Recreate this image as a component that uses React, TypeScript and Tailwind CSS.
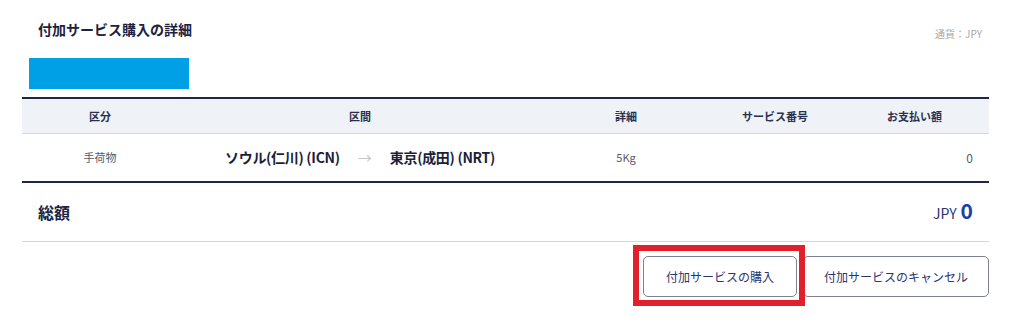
const font = { fontFamily: '"Noto Sans CJK JP", "Noto Sans", sans-serif' };

const cols = "grid grid-cols-[156px_364px_168px_130px_1fr]";

export default function App() {
  return (
    <div className="w-[1024px] h-[330px] bg-white pl-[22px] pr-[35px] text-[#1c2340]" style={font}>
      {/* heading */}
      <div className="flex items-end justify-between pt-[19px] pl-[16px] pr-[7px]">
        <h2 className="text-[14px] font-bold leading-[20px]">付加サービス購入の詳細</h2>
        <span className="text-[10px] text-[#a6a6a6] leading-[14px] -mb-[2px]">通貨：JPY</span>
      </div>
      <div className="ml-[7px] mt-[19px] h-[31px] w-[160px] bg-[#00a0e6]" />

      {/* table */}
      <div className="mt-[8px] border-t-2 border-[#1c2647]">
        <div className={`${cols} h-[35px] items-center bg-[#eff2f7] border-b border-[#d4d8e0] text-[11px] font-bold text-[#2a3150]`}>
          <div className="text-center">区分</div>
          <div className="text-center">区間</div>
          <div className="text-center">詳細</div>
          <div className="text-center">サービス番号</div>
          <div className="text-center">お支払い額</div>
        </div>
        <div className={`${cols} h-[47px] items-center text-[11px] text-[#555a66]`}>
          <div className="text-center">手荷物</div>
          <div className="flex items-center justify-center gap-[18px]">
            <span className="text-[14px] font-bold text-[#1b1f3b] tracking-[-0.3px]">ソウル(仁川) (ICN)</span>
            <span className="text-[14px] text-[#c2c6cf]">→</span>
            <span className="text-[14px] font-bold text-[#1b1f3b] tracking-[-0.3px]">東京(成田) (NRT)</span>
          </div>
          <div className="text-center">5Kg</div>
          <div />
          <div className="text-right pr-[16px] text-[12px]">0</div>
        </div>
        <div className="border-t-2 border-[#1c2647] border-b border-b-[#d6d6d6] h-[61px] flex items-center justify-between pl-[16px] pr-[16px]">
          <span className="text-[16px] font-bold">総額</span>
          <span className="flex items-baseline gap-[4px]">
            <span className="text-[14px] text-[#2a3470]">JPY</span>
            <span className="text-[21px] font-bold text-[#1d3fa6] leading-none">0</span>
          </span>
        </div>
      </div>

      {/* actions */}
      <div className="flex justify-end gap-[6px] mt-[14px]">
        <div className="relative">
          <button className="relative z-10 h-[41px] w-[154px] rounded-[5px] border border-[#7c8194] bg-white text-[12px] text-[#2a3470]">
            付加サービスの購入
          </button>
          <div className="absolute -left-[10px] -right-[8px] -top-[11px] -bottom-[9px] border-[6px] border-[#e0202a]" />
        </div>
        <button className="h-[41px] w-[186px] rounded-[5px] border border-[#7c8194] bg-white text-[12px] text-[#2a3470]">
          付加サービスのキャンセル
        </button>
      </div>
    </div>
  );
}
